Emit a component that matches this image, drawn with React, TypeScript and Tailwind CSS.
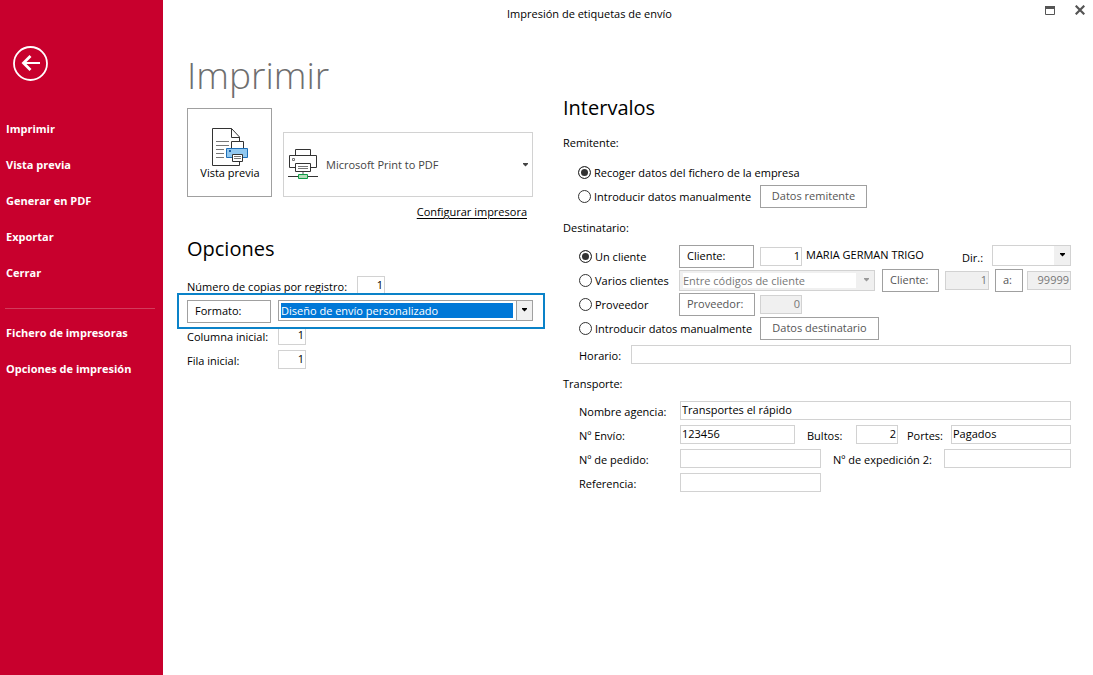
import { useState, type ReactNode } from 'react';
import clsx from 'clsx';

const mainLinks = ['Imprimir', 'Vista previa', 'Generar en PDF', 'Exportar', 'Cerrar'];
const extraLinks = ['Fichero de impresoras', 'Opciones de impresión'];

export default function App() {
  return (
    <div className="flex min-h-screen bg-white font-['Open_Sans','Noto_Sans',sans-serif] text-[11px] leading-4 text-black">
      <Sidebar />
      <main className="flex-1 min-w-0">
        <TitleBar />
        <div className="flex gap-[30px] pl-6 pr-[22px]">
          <div className="w-[346px] shrink-0 pt-5">
            <PrinterSection />
            <OptionsSection />
          </div>
          <div className="flex-1 min-w-0 pt-16">
            <h2 className="h-8 text-xl leading-8">Intervalos</h2>
            <SenderSection />
            <RecipientSection />
            <TransportSection />
          </div>
        </div>
      </main>
    </div>
  );
}

function Sidebar() {
  return (
    <aside className="w-[163px] shrink-0 bg-[#c8002d] text-white">
      <button type="button" aria-label="Volver" className="block ml-[13px] mt-[46px] size-[35px]">
        <svg width="35" height="35" viewBox="0 0 35 35" fill="none" stroke="currentColor">
          <circle cx="17.5" cy="17.5" r="16.5" strokeWidth="1.8" />
          <path d="M10 17H27" strokeWidth="2" />
          <path d="M17.5 10L10.500 17l7 7" strokeWidth="2.8" />
        </svg>
      </button>
      <nav className="mt-[30px] font-bold">
        {mainLinks.map((label) => (
          <NavLink key={label} label={label} />
        ))}
        <hr className="ml-[5px] mr-2 mt-[17px] mb-[6px] border-[#d23c5c]" />
        {extraLinks.map((label) => (
          <NavLink key={label} label={label} />
        ))}
      </nav>
    </aside>
  );
}

function NavLink({ label }: { label: string }) {
  return (
    <a href="#" className="flex items-center h-9 pl-[6px] whitespace-nowrap">
      {label}
    </a>
  );
}

function TitleBar() {
  return (
    <header className="flex h-7 pl-[344px] pr-2">
      <h1 className="flex-1 leading-7 whitespace-nowrap">Impresión de etiquetas de envío</h1>
      <div className="flex gap-5 pt-[5px] text-[#555]">
        <button type="button" aria-label="Maximizar" className="size-[10px]">
          <svg width="10" height="10" viewBox="0 0 10 10" fill="none" stroke="currentColor">
            <path d="M.5 1.500h9v8h-9z" />
            <path d="M0 2.500h10" strokeWidth="3" />
          </svg>
        </button>
        <button type="button" aria-label="Cerrar ventana" className="size-[10px]">
          <svg width="10" height="10" viewBox="0 0 10 10" fill="none" stroke="currentColor" strokeWidth="2.2">
            <path d="M.7.7l8.600 8.600M9.300.7L.7 9.300" />
          </svg>
        </button>
      </div>
    </header>
  );
}

function PrinterSection() {
  return (
    <section>
      <h2 className="h-14 text-[37px] leading-[54px] font-light text-[#6e6e6e]">Imprimir</h2>
      <div className="flex items-end gap-[11px] mt-1">
        <button
          type="button"
          className="flex flex-col items-center w-[85px] h-[89px] pl-px pt-[19px] border border-[#a0a0a0]"
        >
          <PreviewIcon />
          <span className="leading-3 whitespace-nowrap">Vista previa</span>
        </button>
        <div className="flex flex-1 items-center h-[65px] pl-1 pr-[3px] border border-[#d2d2d2]">
          <NetworkPrinterIcon />
          <select
            aria-label="Impresora"
            className="flex-1 min-w-0 h-8 ml-2 appearance-none outline-none text-[#444]"
          >
            <option>Microsoft Print to PDF</option>
          </select>
          <Arrow className="text-[#444]" />
        </div>
      </div>
      <div className="flex justify-end h-5 mt-[5px] pr-[6px]">
        <a href="#" className="leading-5 underline underline-offset-2">
          Configurar impresora
        </a>
      </div>
    </section>
  );
}

function OptionsSection() {
  return (
    <section className="mt-[11px]">
      <h2 className="h-8 text-xl leading-8">Opciones</h2>
      <div className="flex items-center h-[19px] mt-[11px]">
        <Label htmlFor="copias" className="w-[170px]">
          Número de copias por registro:
        </Label>
        <Field id="copias" value="1" className="w-7 text-right" />
      </div>
      <div className="relative flex items-center gap-[7px] h-9 -ml-[10px] -mr-3 -mt-[2px] px-2 pr-[10px] border-2 border-[#0a82c8] bg-white">
        <Button className="w-[84px] text-left">Formato:</Button>
        <div className="flex flex-1 h-[21px] mb-[2px] border border-[#a0a0a0]">
          <select
            aria-label="Formato"
            className="flex-1 min-w-0 h-[15px] m-[2px] appearance-none outline-none bg-[#0078d7] text-white"
          >
            <option>Diseño de envío personalizado</option>
          </select>
          <span className="flex items-center justify-center w-4 ml-px border-l border-[#a0a0a0] bg-[#f0f0f0]">
            <Arrow />
          </span>
        </div>
      </div>
      <div className="flex items-center h-[19px] -mt-[3px]">
        <Label htmlFor="columna" className="w-[91px]">
          Columna inicial:
        </Label>
        <Field id="columna" value="1" className="w-7 text-right" />
      </div>
      <div className="flex items-center h-[19px] mt-[5px]">
        <Label htmlFor="fila" className="w-[91px]">
          Fila inicial:
        </Label>
        <Field id="fila" value="1" className="w-7 text-right" />
      </div>
    </section>
  );
}

function SenderSection() {
  const [mode, setMode] = useState('empresa');

  return (
    <fieldset className="min-w-0 mt-[9px]">
      <legend className="h-5 leading-5">Remitente:</legend>
      <div className="mt-[7px] pl-[15px]">
        <Row>
          <Radio name="remitente" checked={mode === 'empresa'} onChange={() => setMode('empresa')}>
            Recoger datos del fichero de la empresa
          </Radio>
        </Row>
        <Row>
          <div className="w-[182px]">
            <Radio name="remitente" checked={mode === 'manual'} onChange={() => setMode('manual')}>
              Introducir datos manualmente
            </Radio>
          </div>
          <Button disabled className="w-[107px]">
            Datos remitente
          </Button>
        </Row>
      </div>
    </fieldset>
  );
}

function RecipientSection() {
  const [target, setTarget] = useState('cliente');

  return (
    <fieldset className="min-w-0 mt-[10px]">
      <legend className="h-5 leading-5">Destinatario:</legend>
      <div className="mt-[6px] pl-4">
        <Row>
          <div className="w-[100px]">
            <Radio name="destino" checked={target === 'cliente'} onChange={() => setTarget('cliente')}>
              Un cliente
            </Radio>
          </div>
          <Button className="w-[75px] text-left">Cliente:</Button>
          <Field aria-label="Código de cliente" value="1" className="w-[42px] ml-[6px] text-right" />
          <span className="flex-1 ml-1 pb-[2px] whitespace-nowrap">MARIA GERMAN TRIGO</span>
          <Label htmlFor="direccion" className="w-[30px]">
            Dir.:
          </Label>
          <div className="flex w-[79px] h-[21px] mb-[2px] border border-[#d2d2d2]">
            <select id="direccion" className="flex-1 min-w-0 appearance-none outline-none">
              <option></option>
            </select>
            <span className="flex items-center justify-center w-4 bg-[#f0f0f0]">
              <Arrow />
            </span>
          </div>
        </Row>
        <Row>
          <div className="w-[100px]">
            <Radio name="destino" checked={target === 'varios'} onChange={() => setTarget('varios')}>
              Varios clientes
            </Radio>
          </div>
          <div className="flex flex-1 h-[21px] pl-[3px] border border-[#d2d2d2] bg-[#f0f0f0]">
            <select
              disabled
              aria-label="Intervalo de clientes"
              className="flex-1 min-w-0 my-[2px] appearance-none outline-none bg-white text-[#777] opacity-100"
            >
              <option>Entre códigos de cliente</option>
            </select>
            <span className="flex items-center justify-center w-4 ml-[2px]">
              <Arrow className="text-[#999]" />
            </span>
          </div>
          <Button disabled className="w-[57px] ml-[7px] text-left">
            Cliente:
          </Button>
          <Field disabled aria-label="Desde cliente" value="1" className="w-11 ml-[6px] text-right" />
          <Button disabled className="w-7 ml-[6px] text-left">
            a:
          </Button>
          <Field disabled aria-label="Hasta cliente" value="99999" className="w-11 ml-1 text-right" />
        </Row>
        <Row>
          <div className="w-[100px]">
            <Radio name="destino" checked={target === 'proveedor'} onChange={() => setTarget('proveedor')}>
              Proveedor
            </Radio>
          </div>
          <Button disabled className="w-[76px] text-left">
            Proveedor:
          </Button>
          <Field disabled aria-label="Código de proveedor" value="0" className="w-[42px] ml-[5px] text-right" />
        </Row>
        <Row>
          <div className="w-[181px]">
            <Radio name="destino" checked={target === 'manual'} onChange={() => setTarget('manual')}>
              Introducir datos manualmente
            </Radio>
          </div>
          <Button disabled className="w-[119px]">
            Datos destinatario
          </Button>
        </Row>
        <div className="mt-[2px]">
          <Row>
            <Label htmlFor="horario" className="w-[52px]">
              Horario:
            </Label>
            <Field id="horario" value="" className="flex-1" />
          </Row>
        </div>
      </div>
    </fieldset>
  );
}

function TransportSection() {
  return (
    <fieldset className="min-w-0 mt-2">
      <legend className="h-5 leading-5">Transporte:</legend>
      <div className="mt-1 pl-4">
        <Row>
          <Label htmlFor="agencia" className="w-[101px]">
            Nombre agencia:
          </Label>
          <Field id="agencia" value="Transportes el rápido" className="flex-1" />
        </Row>
        <Row>
          <Label htmlFor="envio" className="w-[101px]">
            Nº Envío:
          </Label>
          <Field id="envio" value="123456" className="w-[115px]" />
          <Label htmlFor="bultos" className="w-[49px] ml-3">
            Bultos:
          </Label>
          <Field id="bultos" value="2" className="w-[42px] text-right" />
          <Label htmlFor="portes" className="w-11 ml-[9px]">
            Portes:
          </Label>
          <Field id="portes" value="Pagados" className="flex-1" />
        </Row>
        <Row>
          <Label htmlFor="pedido" className="w-[101px]">
            Nº de pedido:
          </Label>
          <Field id="pedido" value="" className="w-[141px]" />
          <Label htmlFor="expedicion" className="w-[111px] ml-3">
            Nº de expedición 2:
          </Label>
          <Field id="expedicion" value="" className="flex-1" />
        </Row>
        <Row>
          <Label htmlFor="referencia" className="w-[101px]">
            Referencia:
          </Label>
          <Field id="referencia" value="" className="w-[141px]" />
        </Row>
      </div>
    </fieldset>
  );
}

function Row({ children }: { children: ReactNode }) {
  return <div className="flex items-center h-6">{children}</div>;
}

interface LabelProps {
  htmlFor: string;
  className?: string;
  children: ReactNode;
}

function Label({ htmlFor, className, children }: LabelProps) {
  return (
    <label htmlFor={htmlFor} className={clsx('shrink-0 pt-[3px] whitespace-nowrap', className)}>
      {children}
    </label>
  );
}

interface FieldProps {
  id?: string;
  value: string;
  disabled?: boolean;
  className?: string;
  'aria-label'?: string;
}

function Field({ value, className, ...rest }: FieldProps) {
  return (
    <input
      type="text"
      defaultValue={value}
      className={clsx(
        'min-w-0 h-[19px] px-px pb-[2px] border border-[#d2d2d2] outline-none disabled:bg-[#f0f0f0] disabled:text-[#777]',
        className,
      )}
      {...rest}
    />
  );
}

interface ButtonProps {
  disabled?: boolean;
  className?: string;
  children: ReactNode;
}

function Button({ disabled, className, children }: ButtonProps) {
  return (
    <button
      type="button"
      disabled={disabled}
      className={clsx(
        'shrink-0 h-[23px] px-[7px] border border-[#a0a0a0] bg-white whitespace-nowrap disabled:text-[#555]',
        className,
      )}
    >
      {children}
    </button>
  );
}

interface RadioProps {
  name: string;
  checked: boolean;
  onChange: () => void;
  children: ReactNode;
}

function Radio({ name, checked, onChange, children }: RadioProps) {
  return (
    <label className="flex items-center gap-[3px] whitespace-nowrap">
      <input
        type="radio"
        name={name}
        checked={checked}
        onChange={onChange}
        className="shrink-0 size-[13px] appearance-none rounded-full border border-[#333] bg-white checked:bg-[#333] checked:shadow-[inset_0_0_0_2px_white]"
      />
      <span className="pt-[2px]">{children}</span>
    </label>
  );
}

function Arrow({ className }: { className?: string }) {
  return (
    <svg width="7" height="4" viewBox="0 0 7 4" fill="currentColor" className={clsx('shrink-0', className)}>
      <path d="M1 0h5v1L3.5 3.5 1 1z" />
    </svg>
  );
}

function PreviewIcon() {
  return (
    <svg width="38" height="39" viewBox="0 0 38 39" fill="none" stroke="#333" className="shrink-0">
      <path d="M1.5 .5h19l8 8.500v28.500h-27z" fill="#fff" />
      <path d="M20.500.5v9h8" />
      <path d="M5 13.500h13M5 17.500h13M5 21.500h8M5 25.500h8M5 29.500h8" stroke="#777" />
      <path d="M20.500 13.500h12v7h-12z" fill="#fff" />
      <path d="M15.500 20.500h21v9h-21z" fill="#91c8f0" stroke="#1e6fb8" />
      <path d="M18 22h2v2h-2z" fill="#1e5fa8" stroke="none" />
      <path d="M21.500 26.500h10v7h-10z" fill="#fff" />
      <path d="M23 28.500h7M23 30.500h7" stroke="#777" />
    </svg>
  );
}

function NetworkPrinterIcon() {
  return (
    <svg width="30" height="31" viewBox="0 0 30 31" fill="none" stroke="#333" className="shrink-0">
      <path d="M7.500.5h15v6h-15z" fill="#fff" />
      <path d="M1.500 6.500h27v12h-27z" fill="#fff" />
      <path d="M4.500 9.500h2v2h-2z" stroke="#777" />
      <path d="M7.500 14.500h15v8h-15z" fill="#fff" />
      <path d="M10 17.500h10M10 19.500h10" stroke="#777" />
      <path d="M15 23v3" stroke="#aaa" strokeWidth="2" />
      <path d="M0 27.500h10M20 27.500h10" />
      <path d="M10.500 25.500h9v4h-9z" fill="#b4dcb9" stroke="#0f9d46" />
    </svg>
  );
}
